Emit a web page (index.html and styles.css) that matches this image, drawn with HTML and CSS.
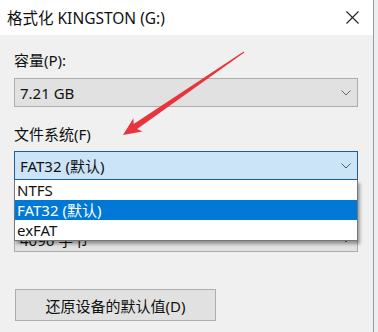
FILE: index.html
```html
<!DOCTYPE html>
<html lang="zh-CN">
<head>
<meta charset="utf-8">
<title>格式化 KINGSTON (G:)</title>
<link rel="stylesheet" href="styles.css">
</head>
<body>
<div class="window">
  <div class="titlebar">
    <span class="title">格式化 KINGSTON (G:)</span>
    <svg class="close" width="13" height="13" viewBox="0 0 13 13"><path d="M0.5 0.5 L12.5 12.5 M12.5 0.5 L0.5 12.5" stroke="#222" stroke-width="1.1" fill="none"/></svg>
  </div>
  <div class="content">
    <div class="label first">容量(P):</div>
    <div class="select">
      <span>7.21 GB</span>
      <svg class="chev" width="10" height="6" viewBox="0 0 10 6"><path d="M0.5 0.5 L5 5 L9.5 0.5" stroke="#666" fill="none"/></svg>
    </div>
    <div class="label">文件系统(F)</div>
    <div class="fs-wrap">
      <div class="select active">
        <span>FAT32 (默认)</span>
        <svg class="chev" width="10" height="6" viewBox="0 0 10 6"><path d="M0.5 0.5 L5 5 L9.5 0.5" stroke="#555" fill="none"/></svg>
      </div>
      <ul class="dropdown">
        <li>NTFS</li>
        <li class="sel">FAT32 (默认)</li>
        <li>exFAT</li>
      </ul>
    </div>
    <div class="label third">分配单元大小(A)</div>
    <div class="select low">
      <span>4096 字节</span>
      <svg class="chev" width="10" height="6" viewBox="0 0 10 6"><path d="M0.5 0.5 L5 5 L9.5 0.5" stroke="#666" fill="none"/></svg>
    </div>
    <button class="btn">还原设备的默认值(D)</button>
  </div>
  <svg class="arrow" width="378" height="332" viewBox="0 0 378 332">
    <polygon points="243.7,51.6 133.7,124.0 133.4,118.2 123,135 142.4,131.4 137.1,129.0 244.3,52.4" fill="#e8343c"/>
  </svg>
</div>
</body>
</html>
```
FILE: styles.css
```css
html, body {
  margin: 0;
  padding: 0;
  background: #eceef0;
}
body {
  width: 378px;
  height: 332px;
  overflow: hidden;
  font-family: "Noto Sans", "Noto Sans CJK SC", sans-serif;
  font-size: 15px;
  color: #111;
}
.window {
  position: relative;
  width: 374px;
  height: 332px;
  background: #f0f0f0;
  border-right: 1px solid #9a9a9a;
  box-sizing: border-box;
}
.titlebar {
  height: 35px;
  background: #fff;
  display: flex;
  align-items: center;
  justify-content: space-between;
  padding: 0 14px 0 7px;
}
.title {
  font-size: 15.5px;
  line-height: 20px;
  color: #111;
}
.close {
  display: block;
  margin-top: -1px;
}
.content {
  padding: 15px 15px 0 14px;
  display: flex;
  flex-direction: column;
}
.label {
  line-height: 20px;
  height: 20px;
  margin-top: 17px;
  margin-bottom: 7px;
}
.label.first {
  margin-top: 0;
  margin-bottom: 8px;
}
.label.third {
  margin-top: 16px;
}
.select {
  height: 29px;
  box-sizing: border-box;
  border: 1px solid #adadad;
  background: #e1e1e1;
  display: flex;
  align-items: center;
  justify-content: space-between;
  padding: 0 6px 0 5px;
  line-height: 20px;
}
.select.low {
  padding-top: 4px;
}
.select.active {
  background: #cce4f7;
  border-color: #1c5f95;
}
.chev {
  display: block;
}
.fs-wrap {
  position: relative;
}
.dropdown {
  position: absolute;
  top: 29px;
  left: 0;
  right: 0;
  margin: 0;
  padding: 0;
  list-style: none;
  background: #fff;
  border: 1px solid #767676;
  border-top: none;
  box-shadow: 2px 3px 3px rgba(0,0,0,0.35);
  z-index: 2;
}
.dropdown li {
  height: 20px;
  line-height: 20px;
  padding-left: 2px;
}
.dropdown li.sel {
  background: #0078d7;
  color: #fff;
}
.btn {
  align-self: flex-start;
  margin-top: 37px;
  margin-left: 1px;
  width: 201px;
  height: 32px;
  border: 1px solid #adadad;
  background: #e1e1e1;
  font-family: "Noto Sans", "Noto Sans CJK SC", sans-serif;
  font-size: 15px;
  color: #111;
  padding: 0;
}
.arrow {
  position: absolute;
  left: 0;
  top: 0;
  pointer-events: none;
  z-index: 5;
}
```
